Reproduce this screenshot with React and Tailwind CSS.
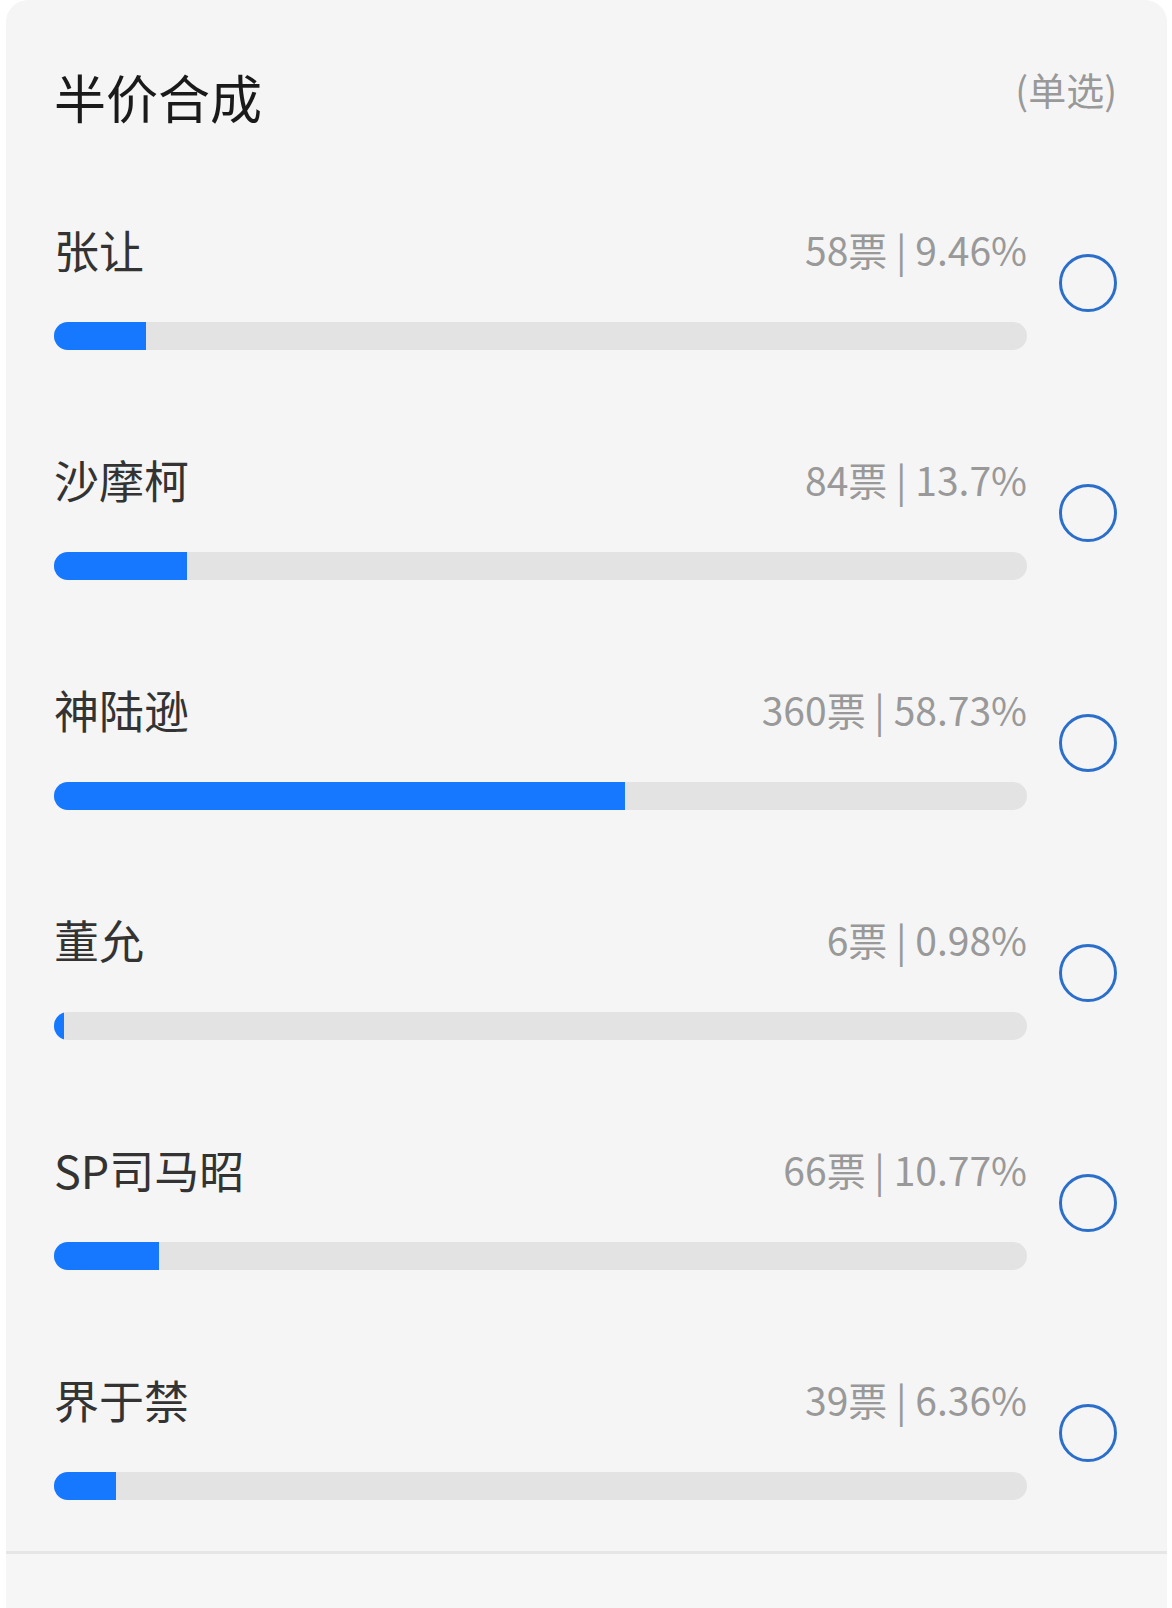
import React from "react";

const rows = [
  { name: "张让", votes: 58, pct: "9.46" },
  { name: "沙摩柯", votes: 84, pct: "13.7" },
  { name: "神陆逊", votes: 360, pct: "58.73" },
  { name: "董允", votes: 6, pct: "0.98" },
  { name: "SP司马昭", votes: 66, pct: "10.77" },
  { name: "界于禁", votes: 39, pct: "6.36" },
];

export default function App() {
  return (
    <div
      className="min-h-[1608px] bg-white pl-[6px] pr-[5px] flex flex-col"
      style={{ fontFamily: '"Noto Sans CJK SC", "Noto Sans", sans-serif' }}
    >
      <div className="flex-1 bg-[#f5f5f5] rounded-t-[22px] pt-[71px] flex flex-col">
        <div className="flex justify-between items-start pl-[48px] pr-[50px]">
          <div className="text-[52px] leading-none text-[#1a1a1a]">半价合成</div>
          <div className="text-[38px] leading-none text-[#999999] mt-[-1px]">(单选)</div>
        </div>
        <div className="flex flex-col pl-[48px] pr-[50px] pt-[104px]">
          {rows.map((r, i) => (
            <div
              key={i}
              className={`flex items-start gap-[32px] ${i < rows.length - 1 ? "mb-[107px]" : "mb-[51px]"}`}
            >
              <div className="flex-1 flex flex-col">
                <div className="flex justify-between items-start h-[45px]">
                  <span className="text-[45px] leading-none text-[#333333]">{r.name}</span>
                  <span className="text-[39px] leading-none text-[#999999] mt-[3px] whitespace-pre">
                    {r.votes}票 | {r.pct}%
                  </span>
                </div>
                <div className="mt-[50px] h-[28px] rounded-full bg-[#e3e3e3] overflow-hidden">
                  <div className="h-full bg-[#1677ff]" style={{ width: `${r.pct}%` }} />
                </div>
              </div>
              <div className="mt-[27px] w-[58px] h-[58px] rounded-full border-[3px] border-[#2b6fcb] shrink-0" />
            </div>
          ))}
        </div>
        <div className="h-[3px] bg-[#e6e6e6]" />
        <div className="flex-1 bg-[#f6f6f6]" />
      </div>
    </div>
  );
}
